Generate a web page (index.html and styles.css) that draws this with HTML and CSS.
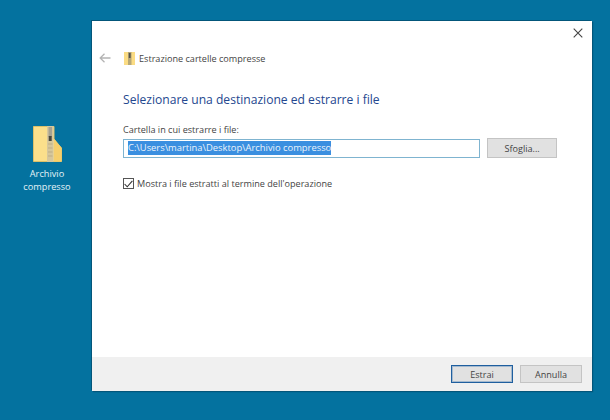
FILE: index.html
```html
<!DOCTYPE html>
<html lang="it">
<head>
<meta charset="utf-8">
<title>Estrazione cartelle compresse</title>
<link rel="stylesheet" href="styles.css">
</head>
<body>
<div class="desktop">
  <div class="desk-icon">
    <svg class="zip-large" width="29" height="36" viewBox="0 0 29 36">
      <path d="M.5 .5H21V13L28.5 22V35.5H.5Z" fill="#fbdf8b" stroke="#dcc06a"/>
      <path d="M21 13L28.5 22V35.5H21Z" fill="#f6cf6c"/>
      <rect x="14" y="0" width="6.5" height="36" fill="#d6c79c"/>
      <rect x="15.5" y="1" width="3.5" height="10" fill="#a5a292"/>
      <rect x="15.7" y="10" width="3" height="5" fill="#45463f"/>
      <path d="M15 18H19.5M15 22H19.5M15 26H19.5M15 30H19.5" stroke="#bdad85"/>
    </svg>
    <div class="desk-label">Archivio<br>compresso</div>
  </div>

  <div class="dialog">
    <div class="close-row">
      <svg class="close" width="10" height="10" viewBox="0 0 10 10"><path d="M.7.7L9.3 9.3M9.3.7L.7 9.3" stroke="#444" stroke-width="1.1" fill="none"/></svg>
    </div>
    <div class="nav">
      <svg class="back" width="12" height="10" viewBox="0 0 12 10"><path d="M5.5.8L1.2 5L5.5 9.2M1.2 5H11.5" stroke="#b4b4b4" stroke-width="1.3" fill="none"/></svg>
      <svg class="zip-small" width="11" height="13" viewBox="0 0 11 13">
        <rect width="11" height="13" fill="#fbdc84"/>
        <rect x="4" width="3.5" height="13" fill="#b7a878"/>
        <rect x="4.8" y="1" width="1.8" height="5" fill="#55534a"/>
      </svg>
      <span class="nav-title">Estrazione cartelle compresse</span>
    </div>
    <div class="content">
      <h1 class="heading">Selezionare una destinazione ed estrarre i file</h1>
      <div class="field-label">Cartella in cui estrarre i file:</div>
      <div class="field-row">
        <div class="path-input"><span class="selected">C:\Users\martina\Desktop\Archivio compresso</span></div>
        <div class="btn browse">Sfoglia...</div>
      </div>
      <div class="check-row">
        <span class="checkbox">
          <svg width="9" height="8" viewBox="0 0 9 8"><path d="M.6 4L3.2 6.8L8.4.8" stroke="#333" stroke-width="1.1" fill="none"/></svg>
        </span>
        <span class="check-label">Mostra i file estratti al termine dell'operazione</span>
      </div>
    </div>
    <div class="footer">
      <div class="btn primary">Estrai</div>
      <div class="btn">Annulla</div>
    </div>
  </div>
</div>
</body>
</html>
```
FILE: styles.css
```css
* { box-sizing: border-box; }
html, body { margin: 0; padding: 0; }
body {
  width: 610px;
  height: 420px;
  overflow: hidden;
  font-family: "Open Sans", "Noto Sans", sans-serif;
  color: #3c3c3c;
}
.desktop {
  position: relative;
  width: 610px;
  height: 420px;
  background: #04729f;
}
.desk-icon {
  position: absolute;
  left: 17px;
  top: 126px;
  width: 60px;
  display: flex;
  flex-direction: column;
  align-items: center;
}
.zip-large { display: block; }
.desk-label {
  margin-top: 5px;
  color: #e6f2f7;
  font-size: 9.2px;
  line-height: 13px;
  text-align: center;
}
.dialog {
  position: absolute;
  left: 92px;
  top: 21px;
  width: 500px;
  height: 370px;
  background: #fff;
  display: flex;
  flex-direction: column;
  box-shadow: -1px -1px 0 #03567a, 1px 1px 1px #03567a;
}
.close-row {
  height: 17px;
  display: flex;
  justify-content: flex-end;
  align-items: flex-end;
  padding: 0 9px 0 0;
}
.nav {
  height: 26px;
  margin-top: 7px;
  padding-left: 7px;
  display: flex;
  align-items: center;
}
.back { margin-right: 13px; }
.zip-small { margin-right: 4px; }
.nav-title { font-size: 9.1px; color: #444; }
.content { flex: 1; padding: 20px 35px 0 31px; }
.heading {
  margin: 0;
  font-size: 12.1px;
  line-height: 18px;
  font-weight: 400;
  color: #24478f;
}
.field-label {
  margin-top: 14px;
  font-size: 9.1px;
  line-height: 13px;
  color: #444;
}
.field-row {
  margin-top: 2px;
  display: flex;
  align-items: center;
  gap: 7px;
}
.path-input {
  width: 358px;
  height: 19px;
  border: 1px solid #7fb4d0;
  padding: 0 0 0 4px;
  display: flex;
  align-items: center;
}
.selected {
  background: #3a8fe0;
  color: #eaf3fb;
  font-size: 9.4px;
  line-height: 14px;
  white-space: nowrap;
}
.btn {
  width: 62px;
  height: 18px;
  background: #e1e1e1;
  border: 1px solid #c4c4c4;
  display: flex;
  align-items: center;
  justify-content: center;
  font-size: 9.1px;
  color: #444;
}
.browse { width: 70px; height: 20px; }
.check-row {
  margin-top: 19px;
  display: flex;
  align-items: center;
  gap: 3px;
}
.checkbox {
  width: 11px;
  height: 11px;
  border: 1px solid #555;
  display: flex;
  align-items: center;
  justify-content: center;
}
.check-label { font-size: 9.1px; color: #444; }
.footer {
  height: 34px;
  background: #f0f0f0;
  padding: 0 10px 0 0;
  display: flex;
  justify-content: flex-end;
  align-items: center;
  gap: 7px;
}
.primary { border: 1px solid #1f5f9f; box-shadow: inset 0 0 0 1px #2c6cab55; }
```
